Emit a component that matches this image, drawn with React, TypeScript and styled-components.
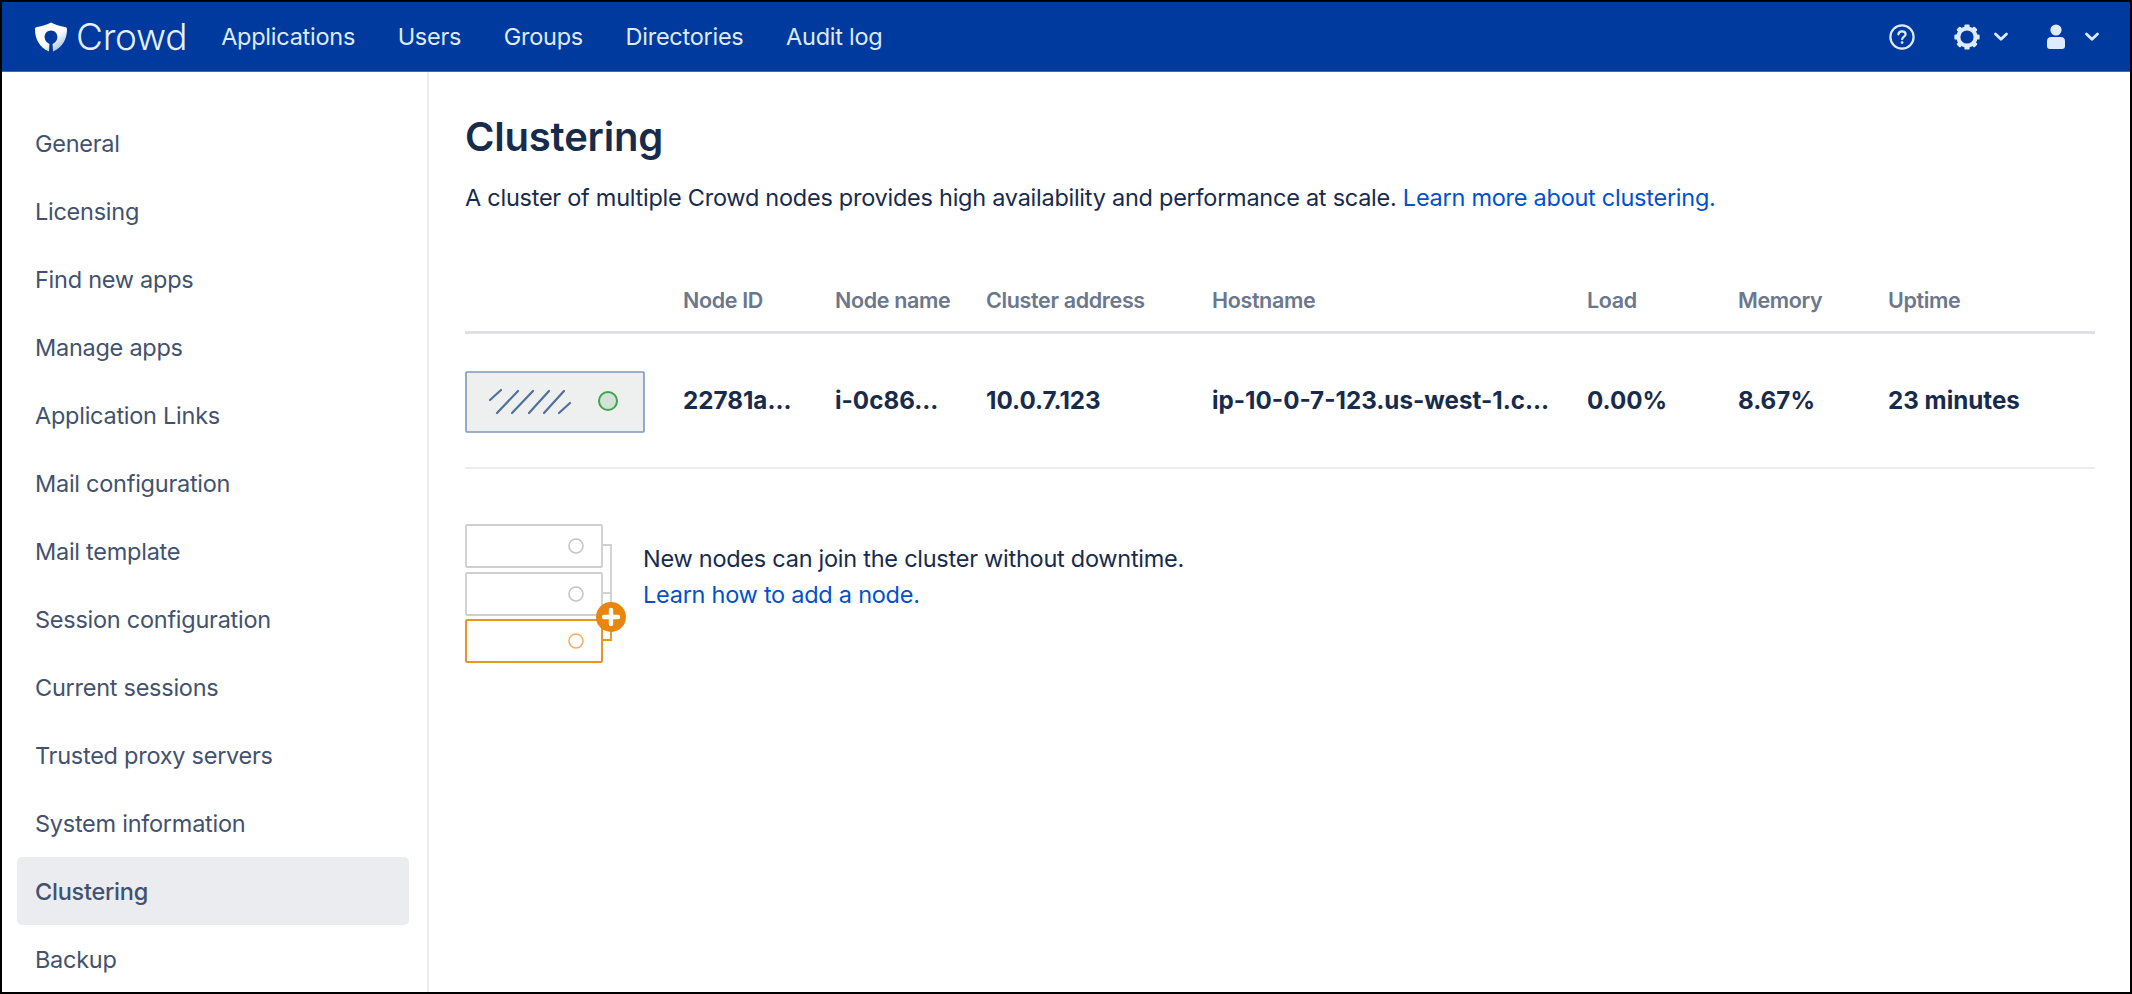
import React from 'react';
import styled, { createGlobalStyle } from 'styled-components';

const GlobalStyle = createGlobalStyle`
  html, body {
    margin: 0;
    padding: 0;
    background: #fff;
  }
  * {
    box-sizing: border-box;
  }
`;

const Frame = styled.div`
  width: 2132px;
  height: 994px;
  border: 2px solid #000;
  display: flex;
  flex-direction: column;
  overflow: hidden;
  font-family: Inter, "Liberation Sans", sans-serif;
  font-size: 23.5px;
  letter-spacing: -0.26px;
  color: #172b4d;
`;

const TopBar = styled.header`
  height: 70px;
  flex: none;
  background: #003a9e;
  border-bottom: 1px solid #3d6ab8;
  display: flex;
  align-items: center;
  padding: 0 30px 0 33px;
`;

const Brand = styled.div`
  display: flex;
  align-items: center;
  gap: 9px;
  color: #e6efff;
  font-size: 37px;
  font-weight: 300;
  letter-spacing: -0.3px;
  margin-right: 34px;
`;

const NavLink = styled.a`
  color: #deebff;
  font-size: 23.5px;
  margin-right: 42.6px;
  white-space: nowrap;
`;

const TopRight = styled.div`
  margin-left: auto;
  display: flex;
  align-items: center;
`;

const IconButton = styled.span<{ $gap?: number }>`
  display: flex;
  align-items: center;
  margin-left: ${p => p.$gap ?? 0}px;
`;

const Content = styled.div`
  flex: 1;
  display: flex;
  min-height: 0;
`;

const Sidebar = styled.nav`
  width: 427px;
  flex: none;
  border-right: 2px solid #ebecf0;
  padding: 37px 18px 0 15px;
  overflow: hidden;
`;

const SideItem = styled.a<{ $active?: boolean }>`
  display: flex;
  align-items: center;
  height: 68px;
  padding-left: 18px;
  border-radius: 5px;
  color: #42526e;
  font-size: 23.5px;
  font-weight: ${p => (p.$active ? 500 : 400)};
  background: ${p => (p.$active ? '#ebecf0' : 'transparent')};
`;

const Main = styled.main`
  flex: 1;
  min-width: 0;
  padding: 41px 35px 0 36px;
`;

const Title = styled.h1`
  margin: 0;
  font-size: 40px;
  line-height: 48px;
  font-weight: 600;
  letter-spacing: -0.2px;
  color: #172b4d;
`;

const Intro = styled.p`
  margin: 21px 0 0;
  line-height: 32px;
`;

const Link = styled.a`
  color: #0052cc;
`;

const Table = styled.div`
  margin-top: 54px;
`;

const Row = styled.div<{ $head?: boolean }>`
  display: grid;
  grid-template-columns: 218px 152px 151px 226px 375px 151px 150px 1fr;
  align-items: center;
  height: ${p => (p.$head ? 66 : 135)}px;
  border-bottom: ${p => (p.$head ? '3px solid #dfe1e6' : '2px solid #ebecf0')};
`;

const HeadCell = styled.div`
  color: #6b778c;
  font-size: 21.5px;
  font-weight: 600;
  letter-spacing: -0.35px;
`;

const Cell = styled.div`
  font-weight: 700;
  font-size: 24.2px;
  letter-spacing: 0;
  white-space: nowrap;
`;

const GraphicCell = styled.div`
  display: flex;
  padding-top: 2px;
`;

const AddNode = styled.div`
  display: flex;
  align-items: center;
  gap: 14px;
  margin-top: 54px;
`;

const AddText = styled.div`
  line-height: 36px;
  margin-bottom: 34px;
`;

const ShieldLogo = () => (
  <svg width="32" height="30" viewBox="0 0 32 30">
    <defs>
      <linearGradient id="shieldFade" x1="0.25" y1="0.2" x2="0.95" y2="1">
        <stop offset="0.45" stopColor="#ffffff" />
        <stop offset="1" stopColor="#7fa3dc" />
      </linearGradient>
    </defs>
    <path
      fill="url(#shieldFade)"
      fillRule="evenodd"
      d="M16 0.5 C20 2.6 25 4.4 30 5 C31.4 5.2 32 6 32 7.2 C32 17 28 24.6 18 29.6 L17.6 22 C20.4 20.8 22.4 18.2 22.4 15 C22.4 11.4 19.6 8.6 16 8.6 C12.4 8.6 9.6 11.4 9.6 15 C9.6 18.2 11.6 20.8 14.4 22 L14 29.6 C4 24.6 0 17 0 7.2 C0 6 0.6 5.2 2 5 C7 4.4 12 2.6 16 0.5 Z"
    />
  </svg>
);

const HelpIcon = () => (
  <svg width="28" height="28" viewBox="0 0 28 28" fill="none">
    <circle cx="14" cy="14" r="11.6" stroke="#deebff" strokeWidth="2.2" />
    <path d="M10.4 11.4 C10.6 9.4 12.2 8.4 14 8.4 C16 8.4 17.6 9.6 17.6 11.4 C17.6 13.6 14.2 13.8 14.2 16.2" stroke="#deebff" strokeWidth="2.2" strokeLinecap="round" />
    <circle cx="14.1" cy="19.6" r="1.4" fill="#deebff" />
  </svg>
);

const GearIcon = () => (
  <svg width="28" height="28" viewBox="0 0 28 28" fill="none">
    <circle cx="14" cy="14" r="8.6" stroke="#deebff" strokeWidth="4" />
    {[0, 45, 90, 135, 180, 225, 270, 315].map(a => (
      <rect key={a} x="11.4" y="1.4" width="5.2" height="4.6" rx="1.2" fill="#deebff" transform={`rotate(${a} 14 14)`} />
    ))}
  </svg>
);

const UserIcon = () => (
  <svg width="20" height="26" viewBox="0 0 20 26">
    <circle cx="10" cy="6" r="5.6" fill="#deebff" />
    <path d="M1 17 C1 14.2 3 13 5 13 L15 13 C17 13 19 14.2 19 17 L19 22 C19 24 18 25 16 25 L4 25 C2 25 1 24 1 22 Z" fill="#deebff" />
  </svg>
);

const Chevron = () => (
  <svg width="16" height="12" viewBox="0 0 16 12" fill="none">
    <path d="M2.5 3 L8 8.2 L13.5 3" stroke="#deebff" strokeWidth="2.8" strokeLinecap="round" strokeLinejoin="round" />
  </svg>
);

const NodeGraphic = () => (
  <svg width="180" height="62" viewBox="0 0 180 62">
    <rect x="1" y="1" width="178" height="60" rx="1" fill="#eef0f0" stroke="#7d97bd" strokeWidth="1.6" />
    <g stroke="#4f7099" strokeWidth="2.2" strokeLinecap="round">
      <line x1="25" y1="29" x2="36" y2="19" />
      <line x1="32" y1="42" x2="53" y2="20" />
      <line x1="47" y1="42" x2="68" y2="20" />
      <line x1="64" y1="42" x2="84" y2="20" />
      <line x1="79" y1="42" x2="99" y2="20" />
      <line x1="94" y1="42" x2="105" y2="32" />
    </g>
    <circle cx="143" cy="30" r="9" fill="#d2e2d6" stroke="#3fa34d" strokeWidth="2" />
  </svg>
);

const AddGraphic = () => (
  <svg width="164" height="142" viewBox="0 0 164 142" fill="none">
    <path d="M138 22 H146 V117 H138" stroke="#cfcfcf" strokeWidth="1.8" />
    <path d="M138 70 H146" stroke="#cfcfcf" strokeWidth="1.8" />
    <path d="M138 117 H146 V96" stroke="#e8961e" strokeWidth="1.8" />
    <rect x="1" y="2" width="136" height="42" rx="1" fill="#fff" stroke="#cfcfcf" strokeWidth="1.8" />
    <circle cx="111" cy="23" r="7" fill="#fff" stroke="#c4c4c4" strokeWidth="1.6" />
    <rect x="1" y="50" width="136" height="42" rx="1" fill="#fff" stroke="#cfcfcf" strokeWidth="1.8" />
    <circle cx="111" cy="71" r="7" fill="#fff" stroke="#c4c4c4" strokeWidth="1.6" />
    <rect x="1" y="97" width="136" height="42" rx="1" fill="#fff" stroke="#e8961e" strokeWidth="2" />
    <circle cx="111" cy="118" r="7" fill="#fff" stroke="#f0b060" strokeWidth="1.6" />
    <circle cx="146" cy="94" r="15" fill="#e8860e" />
    <path d="M146 87 V101 M139 94 H153" stroke="#fff" strokeWidth="4.4" strokeLinecap="round" />
  </svg>
);

const navItems = ['Applications', 'Users', 'Groups', 'Directories', 'Audit log'];

const sideItems = [
  'General',
  'Licensing',
  'Find new apps',
  'Manage apps',
  'Application Links',
  'Mail configuration',
  'Mail template',
  'Session configuration',
  'Current sessions',
  'Trusted proxy servers',
  'System information',
  'Clustering',
  'Backup',
];

const headers = ['', 'Node ID', 'Node name', 'Cluster address', 'Hostname', 'Load', 'Memory', 'Uptime'];

const values = ['22781a...', 'i-0c86...', '10.0.7.123', 'ip-10-0-7-123.us-west-1.c...', '0.00%', '8.67%', '23 minutes'];

const App: React.FC = () => (
  <Frame>
    <GlobalStyle />
    <TopBar>
      <Brand>
        <ShieldLogo />
        Crowd
      </Brand>
      {navItems.map(item => (
        <NavLink key={item}>{item}</NavLink>
      ))}
      <TopRight>
        <IconButton><HelpIcon /></IconButton>
        <IconButton $gap={37}><GearIcon /></IconButton>
        <IconButton $gap={12}><Chevron /></IconButton>
        <IconButton $gap={37}><UserIcon /></IconButton>
        <IconButton $gap={18}><Chevron /></IconButton>
      </TopRight>
    </TopBar>
    <Content>
      <Sidebar>
        {sideItems.map(item => (
          <SideItem key={item} $active={item === 'Clustering'}>{item}</SideItem>
        ))}
      </Sidebar>
      <Main>
        <Title>Clustering</Title>
        <Intro>
          A cluster of multiple Crowd nodes provides high availability and performance at scale.{' '}
          <Link>Learn more about clustering.</Link>
        </Intro>
        <Table>
          <Row $head>
            {headers.map((h, i) => (
              <HeadCell key={i}>{h}</HeadCell>
            ))}
          </Row>
          <Row>
            <GraphicCell><NodeGraphic /></GraphicCell>
            {values.map(v => (
              <Cell key={v}>{v}</Cell>
            ))}
          </Row>
        </Table>
        <AddNode>
          <AddGraphic />
          <AddText>
            New nodes can join the cluster without downtime.
            <br />
            <Link>Learn how to add a node.</Link>
          </AddText>
        </AddNode>
      </Main>
    </Content>
  </Frame>
);

export default App;
